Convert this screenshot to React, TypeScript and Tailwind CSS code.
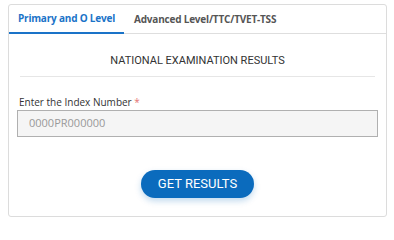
export default function App() {
  return (
    <div className="w-[394px] h-[226px] bg-white pt-[4px] pl-[8px]">
      <div className="w-[379px] h-[213px] border border-[#dcdcdc] rounded-[3px] bg-white flex flex-col">
        <div className="flex h-[29px] border-b border-[#dedede] text-[10px] tracking-[-0.2px] font-bold font-['Open_Sans',sans-serif]">
          <div className="w-[115px] flex items-center justify-center text-[#1a73c8] border-b-2 border-[#1a73c8] -mb-px">
            Primary and O Level
          </div>
          <div className="pl-[10px] flex items-center text-[#555]">Advanced Level/TTC/TVET-TSS</div>
        </div>
        <div className="px-[10px] flex flex-col">
          <div className="flex items-center justify-center border-b border-[#e6e6e6] mx-[1px] text-[11px] leading-[13px] text-[#333] pt-[20px] pb-[9px] font-['Roboto',sans-serif]">
            NATIONAL EXAMINATION RESULTS
          </div>
          <div className="mt-[18px] text-[10px] leading-[14px] text-[#333] font-['Open_Sans',sans-serif]">
            Enter the Index Number <span className="text-[#e57373]">*</span>
          </div>
          <div className="mt-[1px] -mx-[2px] h-[27px] border border-[#b0b0b0] bg-[#f5f5f5] flex items-center pl-[11px] text-[11px] text-[#999] font-['Open_Sans',sans-serif]">
            0000PR000000
          </div>
          <div className="flex justify-center mt-[33px]">
            <button className="w-[113px] h-[28px] rounded-full bg-[#0b6bbd] text-white text-[13px] shadow-[0_3px_6px_rgba(11,107,189,0.25)] font-['Roboto',sans-serif]">
              GET RESULTS
            </button>
          </div>
        </div>
      </div>
    </div>
  );
}
